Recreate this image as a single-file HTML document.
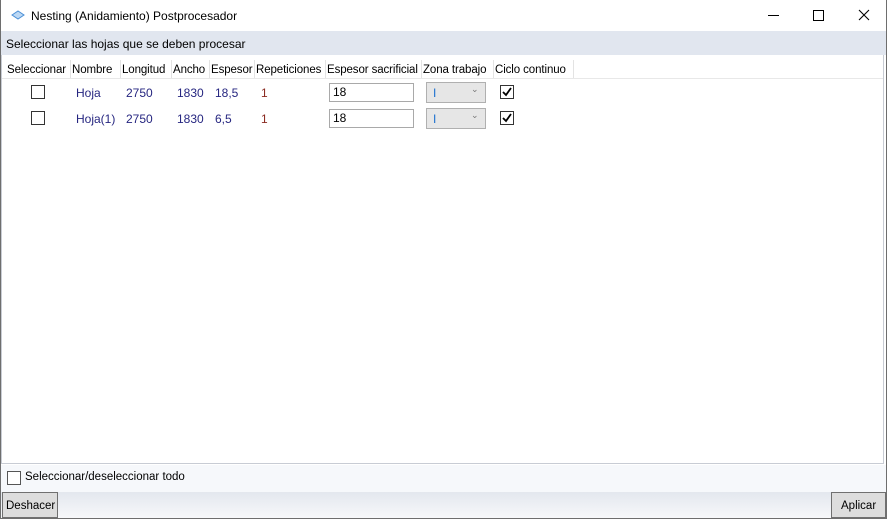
<!DOCTYPE html>
<html><head><style>
body{margin:0;width:894px;height:522px;background:#fff;font-family:"Liberation Sans",sans-serif;font-size:12px;color:#000;position:relative;overflow:hidden}
.win{position:absolute;left:0;top:0;width:885px;height:518px;border:1px solid #6e6e6e;border-top:none;background:#fff}
.abs{position:absolute;white-space:nowrap}
.hdr{position:absolute;top:31px;left:0;width:885px;height:24px;background:#e1e6ef}
.grid{position:absolute;top:55px;left:0px;width:883px;height:409px;border:1px solid #c8ccd4;border-top:none;background:#fff;box-sizing:border-box}
.ch{position:absolute;top:62px;height:16px;line-height:16px;font-size:11.5px;letter-spacing:-0.1px}
.sep{position:absolute;top:60px;width:1px;height:18px;background:#e3e3e3}
.cb{position:absolute;width:12px;height:12px;border:1px solid #333;background:#fff}
.bl{color:#262680}
.rd{color:#8a2a20}
.inp{position:absolute;left:328px;border:1px solid #a9a9a9;line-height:17px;padding-left:3px;box-sizing:border-box;width:85px;height:19px}
.cmb{position:absolute;left:425px;width:60px;height:21px;border:1px solid #b0b0b0;background:#e6e6e6;box-sizing:border-box}
.btn{position:absolute;top:492px;height:26px;border:1px solid #707070;background:#dddddd;line-height:26px;box-sizing:border-box;padding:0 4px;font-size:11.5px}
</style></head><body>
<div class="win">
<svg class="abs" style="left:10px;top:10px" width="14" height="10" viewBox="0 0 14 10"><path d="M1 5 L7 1 L13 5 L7 9 Z" fill="#bcd8f4" stroke="#4a8fd6"/></svg>
<div class="abs" style="left:30px;top:9px">Nesting (Anidamiento) Postprocesador</div>
<div class="abs" style="left:767px;top:15px;width:11px;height:1px;background:#000"></div>
<div class="abs" style="left:812px;top:10px;width:9px;height:9px;border:1px solid #000"></div>
<svg class="abs" style="left:857px;top:9px" width="12" height="12"><path d="M1 1 L11 11 M11 1 L1 11" stroke="#000" stroke-width="1.1"/></svg>
<div class="hdr"><div class="abs" style="left:5px;top:6px">Seleccionar las hojas que se deben procesar</div></div>
<div class="grid"></div>
<div class="abs" style="left:1px;top:78px;width:881px;height:1px;background:#e8e8e8"></div>
<div class="ch" style="left:6px">Seleccionar</div><div class="sep" style="left:69px"></div>
<div class="ch" style="left:71px">Nombre</div><div class="sep" style="left:119px"></div>
<div class="ch" style="left:121px">Longitud</div><div class="sep" style="left:170px"></div>
<div class="ch" style="left:172px">Ancho</div><div class="sep" style="left:208px"></div>
<div class="ch" style="left:210px">Espesor</div><div class="sep" style="left:253px"></div>
<div class="ch" style="left:255px">Repeticiones</div><div class="sep" style="left:324px"></div>
<div class="ch" style="left:326px">Espesor sacrificial</div><div class="sep" style="left:420px"></div>
<div class="ch" style="left:422px">Zona trabajo</div><div class="sep" style="left:492px"></div>
<div class="ch" style="left:494px">Ciclo continuo</div><div class="sep" style="left:572px"></div>

<div class="cb" style="left:30px;top:85px"></div>
<div class="abs bl" style="left:75px;top:86px">Hoja</div>
<div class="abs bl" style="left:125px;top:86px">2750</div>
<div class="abs bl" style="left:176px;top:86px">1830</div>
<div class="abs bl" style="left:214px;top:86px">18,5</div>
<div class="abs rd" style="left:260px;top:86px">1</div>
<div class="inp" style="top:83px">18</div>
<div class="cmb" style="top:82px"><div class="abs" style="left:6px;top:3px;color:#1a6fd0">I</div><div class="abs" style="left:44px;top:1px;font-size:9px;color:#777">&#8964;</div></div>
<div class="cb" style="left:499px;top:85px"><svg width="12" height="12" style="position:absolute;left:0;top:0"><path d="M2 6 L5 9 L10 2" stroke="#000" stroke-width="1.8" fill="none"/></svg></div>

<div class="cb" style="left:30px;top:111px"></div>
<div class="abs bl" style="left:75px;top:112px">Hoja(1)</div>
<div class="abs bl" style="left:125px;top:112px">2750</div>
<div class="abs bl" style="left:176px;top:112px">1830</div>
<div class="abs bl" style="left:214px;top:112px">6,5</div>
<div class="abs rd" style="left:260px;top:112px">1</div>
<div class="inp" style="top:109px">18</div>
<div class="cmb" style="top:108px"><div class="abs" style="left:6px;top:3px;color:#1a6fd0">I</div><div class="abs" style="left:44px;top:1px;font-size:9px;color:#777">&#8964;</div></div>
<div class="cb" style="left:499px;top:111px"><svg width="12" height="12" style="position:absolute;left:0;top:0"><path d="M2 6 L5 9 L10 2" stroke="#000" stroke-width="1.8" fill="none"/></svg></div>

<div class="abs" style="left:0;top:465px;width:885px;height:27px;background:#f6f8fb"></div>
<div class="cb" style="left:6px;top:471px;border-color:#555"></div>
<div class="abs" style="left:24px;top:471px;font-size:11.5px">Seleccionar/deseleccionar todo</div>
<div class="abs" style="left:0;top:492px;width:885px;height:26px;background:linear-gradient(#e3e7ee,#f7f8fa)"></div>
<div class="btn" style="left:1px;width:56px;padding:0 3px">Deshacer</div>
<div class="btn" style="left:830px;width:55px;padding:0 0 0 9px">Aplicar</div>
</div>
</body></html>
